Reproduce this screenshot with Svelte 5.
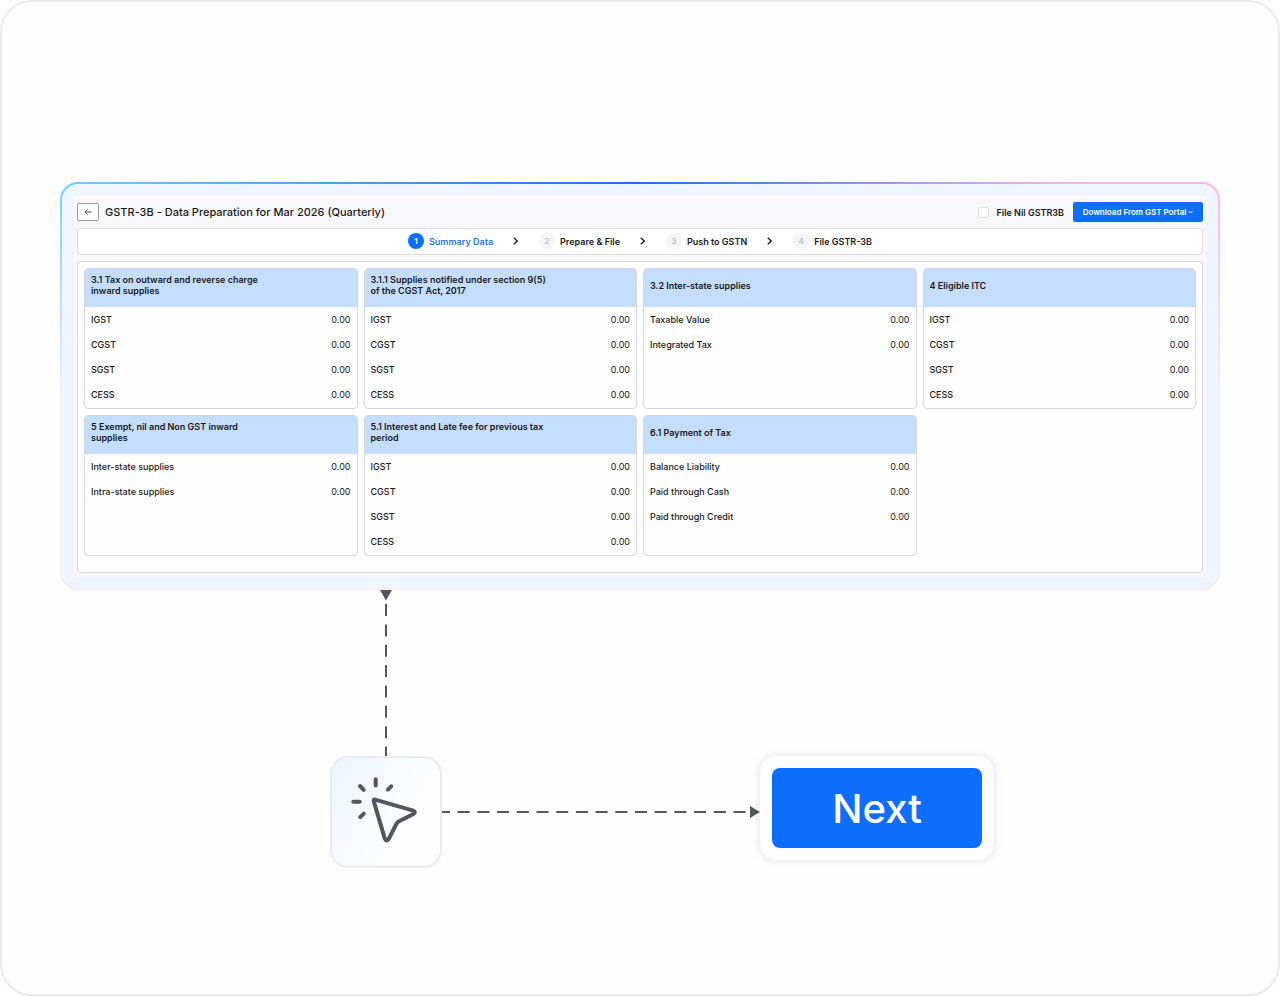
<script>
  const steps = ['Summary Data', 'Prepare & File', 'Push to GSTN', 'File GSTR-3B']
  const taxes = ['IGST', 'CGST', 'SGST', 'CESS']

  const cards = [
    { title: '3.1 Tax on outward and reverse charge inward supplies', rows: taxes },
    { title: '3.1.1 Supplies notified under section 9(5) of the CGST Act, 2017', rows: taxes },
    { title: '3.2 Inter-state supplies', rows: ['Taxable Value', 'Integrated Tax'] },
    { title: '4 Eligible ITC', rows: taxes },
    {
      title: '5 Exempt, nil and Non GST inward supplies',
      rows: ['Inter-state supplies', 'Intra-state supplies']
    },
    { title: '5.1 Interest and Late fee for previous tax period', rows: taxes },
    {
      title: '6.1 Payment of Tax',
      rows: ['Balance Liability', 'Paid through Cash', 'Paid through Credit']
    }
  ]

  let current = 0
  let fileNil = false

  function next() {
    current = Math.min(current + 1, steps.length - 1)
  }
</script>

<main class="frame">
  <section class="panel">
    <div class="screen">
      <header class="toolbar">
        <button class="back" aria-label="Back">
          <svg width="8" height="8" viewBox="0 0 8 8">
            <path d="M7.5 4H1M3.7 1.2L0.9 4L3.7 6.8" />
          </svg>
        </button>
        <h1>GSTR-3B - Data Preparation for Mar 2026 (Quarterly)</h1>
        <label class="nil">
          <input type="checkbox" bind:checked={fileNil} />
          File Nil GSTR3B
        </label>
        <button class="download">
          Download From GST Portal
          <svg width="5" height="4" viewBox="0 0 5 4"><path d="M0.5 1L2.5 3L4.5 1" /></svg>
        </button>
      </header>

      <ol class="stepper">
        {#each steps as step, i}
          {#if i > 0}
            <li class="chevron" aria-hidden="true">
              <svg width="5" height="8" viewBox="0 0 5 8"><path d="M0.8 0.8L4.2 4L0.8 7.2" /></svg>
            </li>
          {/if}
          <li class="step" class:active={i === current}>
            <span class="number">{i + 1}</span>
            {step}
          </li>
        {/each}
      </ol>

      <div class="cards">
        {#each cards as card}
          <article class="card">
            <h2><span>{card.title}</span></h2>
            <table>
              <tbody>
                {#each card.rows as row}
                  <tr>
                    <th scope="row">{row}</th>
                    <td>0.00</td>
                  </tr>
                {/each}
              </tbody>
            </table>
          </article>
        {/each}
      </div>
    </div>
  </section>

  <div class="flow">
    <svg class="up" width="12" height="166" viewBox="0 0 12 166">
      <path class="head" d="M0 0H12L6 10.500Z" />
      <path class="line" d="M6 166V14" stroke-dasharray="12 8.35" stroke-dashoffset="2.5" />
    </svg>
    <div class="tile">
      <svg width="72" height="72" viewBox="0 0 72 72">
        <path
          class="cursor"
          d="M25 23.6L63.300 34.600Q66.600 36.300 63 38.200L49.500 45Q47.500 46 46.300 48L38.800 62.800Q36.600 66.400 34.800 62.600L23.800 25.400Q23.300 23.300 25 23.600Z"
        />
        <path
          class="rays"
          d="M25.700 3.200V9.400M10 10L13.700 13.800M41.200 10.400L37.900 13.700M3.300 25.700H9.700M13.800 37.600L10.200 41.200"
        />
      </svg>
    </div>
    <svg class="across" width="318" height="12" viewBox="0 0 318 12">
      <path class="line" d="M0 6H305" stroke-dasharray="12 7.7" stroke-dashoffset="4" />
      <path class="head" d="M308 0V12L318 6Z" />
    </svg>
    <div class="action">
      <button class="next" on:click={next}>Next</button>
    </div>
  </div>
</main>

<style>
  :global(body) {
    background: #ffffff;
  }

  .frame {
    box-sizing: border-box;
    min-height: 100vh;
    padding: 180px 58px 126px;
    border: 2px solid #ebebeb;
    border-radius: 32px;
    background: #fefefe;
    font-family: Inter, sans-serif;
    color: #18181b;
  }

  button {
    padding: 0;
    border: none;
    font-family: inherit;
    cursor: pointer;
  }

  svg {
    display: block;
    fill: none;
  }

  .panel {
    padding: 12px 12px 11px;
    border: 2px solid transparent;
    border-radius: 18px;
    background:
      linear-gradient(#eff6ff, #eff6ff) padding-box,
      linear-gradient(to bottom, transparent, #f1eef4 50%) border-box,
      linear-gradient(to right, #6dd0ff, #1472fa 50%, #ffb6e1 88%) border-box;
  }

  .screen {
    padding: 6px 3px 4px;
    background: #f8f7fa;
  }

  .toolbar {
    display: flex;
    align-items: center;
    height: 20px;
  }

  .back {
    display: flex;
    align-items: center;
    justify-content: center;
    width: 22px;
    height: 18px;
    border: 1px solid #98989d;
    border-radius: 2px;
    background: #fafafa;
  }

  .back svg {
    stroke: #55555a;
  }

  h1 {
    flex: 1;
    margin: 0 0 0 6px;
    font-size: 11px;
    font-weight: 500;
  }

  .nil {
    display: flex;
    align-items: center;
    gap: 8px;
    margin-right: 9px;
    font-size: 9px;
    font-weight: 600;
  }

  .nil input {
    appearance: none;
    width: 11px;
    height: 11px;
    margin: 0;
    border: 1px solid #e0e0e4;
    border-radius: 2px;
    background: #ffffff;
  }

  .nil input:checked {
    background: #0d6efd;
  }

  .download {
    display: flex;
    align-items: center;
    justify-content: center;
    gap: 2px;
    width: 130px;
    height: 20px;
    border-radius: 2px;
    background: #0d6efd;
    color: #ffffff;
    font-size: 8px;
    font-weight: 600;
    white-space: nowrap;
  }

  .download svg {
    stroke: #ffffff;
  }

  .stepper {
    display: flex;
    align-items: center;
    justify-content: center;
    box-sizing: border-box;
    height: 27px;
    margin: 6px 0;
    padding: 0 0 1px;
    border: 1px solid #dddbe0;
    border-radius: 3px;
    background: #ffffff;
    list-style: none;
    font-size: 9px;
    font-weight: 600;
  }

  .step {
    display: flex;
    align-items: center;
    gap: 5px;
  }

  .number {
    display: flex;
    align-items: center;
    justify-content: center;
    width: 16px;
    height: 16px;
    border-radius: 50%;
    background: #f5f4f6;
    color: #bdbdc2;
    font-size: 8px;
  }

  .active {
    color: #1a78fc;
  }

  .active .number {
    background: #0d6efd;
    color: #ffffff;
  }

  .chevron {
    margin: 0 21px 0 20px;
  }

  .chevron svg {
    stroke: #18181b;
    stroke-width: 1.3;
  }

  .cards {
    display: grid;
    grid-template-columns: repeat(4, 1fr);
    grid-auto-rows: minmax(141px, auto);
    gap: 6px;
    padding: 6px 6px 16px;
    border: 1px solid #d9d8dc;
    border-radius: 3px;
    background: #fefefe;
  }

  .card {
    border: 1px solid #d6d5da;
    border-radius: 4px;
    background: #fefefe;
    overflow: hidden;
    font-size: 9px;
  }

  h2 {
    display: flex;
    align-items: center;
    box-sizing: border-box;
    height: 38px;
    margin: 0;
    padding: 0 6px 6px;
    background: #c5deff;
    font-size: 9px;
    font-weight: 600;
    line-height: 11px;
  }

  h2 span {
    max-width: 180px;
  }

  table {
    width: 100%;
    border-collapse: collapse;
  }

  th,
  td {
    height: 25px;
    padding: 0 6px;
    font-weight: 500;
    text-align: left;
  }

  td {
    font-weight: 400;
    text-align: right;
  }

  .flow {
    display: grid;
    grid-template-columns: 112px 318px 234px;
    margin-left: 270px;
  }

  .line {
    stroke: #55555c;
    stroke-width: 2;
  }

  .head {
    fill: #55555c;
  }

  .up {
    grid-column: 1 / -1;
    margin-left: 50px;
  }

  .across {
    align-self: center;
  }

  .tile {
    display: flex;
    align-items: center;
    justify-content: center;
    box-sizing: border-box;
    height: 112px;
    border: 2px solid #ebeaee;
    border-radius: 18px;
    background: linear-gradient(120deg, #ebf6ff, #fdfdff 65%);
  }

  .cursor {
    stroke: #53565d;
    stroke-width: 4;
    stroke-linejoin: round;
  }

  .rays {
    stroke: #53565d;
    stroke-width: 4;
    stroke-linecap: round;
  }

  .action {
    align-self: start;
    padding: 12px;
    border-radius: 16px;
    background: #fdfdff;
    box-shadow: 0 0 6px 2px rgba(60, 50, 80, 0.1);
  }

  .next {
    display: block;
    width: 100%;
    height: 80px;
    border-radius: 8px;
    background: #0d6efd;
    color: #ffffff;
    font-size: 40px;
    font-weight: 500;
  }
</style>
